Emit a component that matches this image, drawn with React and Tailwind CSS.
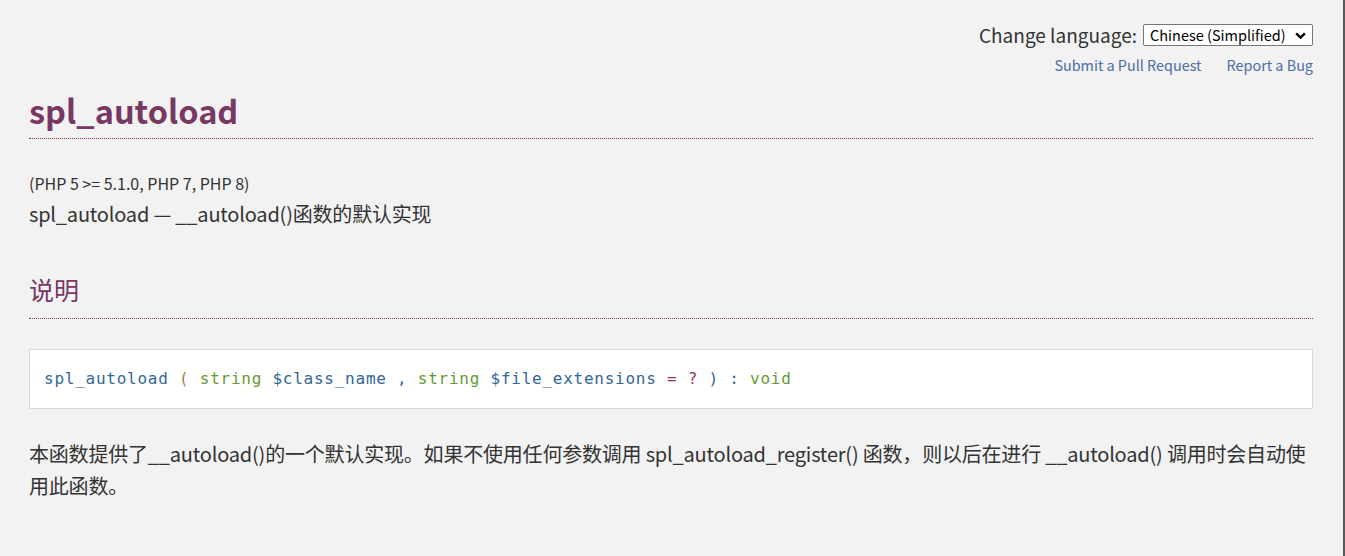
export default function App() {
  const sans = { fontFamily: '"Noto Sans CJK SC", "Noto Sans", sans-serif' };
  const mono = { fontFamily: '"DejaVu Sans Mono", monospace' };
  return (
    <div className="min-h-[556px] bg-[#f2f2f2] text-[#333] border-r-2 border-[#5a5a5a]" style={sans}>
      <div className="pl-[29px] pr-[30px] pt-[22px] pb-10">
        <div className="flex flex-col items-end">
          <div className="flex items-center gap-[6px] h-[26px]">
            <span className="text-[19px] leading-[26px] text-[#333]">Change language:</span>
            <div className="flex items-center justify-between h-[22px] w-[170px] border border-[#767676] bg-white pl-[6px] pr-[5px] rounded-[2px]">
              <span className="text-[14.5px] leading-[20px] text-black">Chinese (Simplified)</span>
              <svg width="13" height="13" viewBox="0 0 12 12" fill="none" stroke="#000" strokeWidth="2.2"><path d="M2 4l4 4 4-4" /></svg>
            </div>
          </div>
          <div className="flex gap-[25px] mt-[7px] text-[14.4px] leading-[20px] text-[#4a6ea5]">
            <span>Submit a Pull Request</span>
            <span>Report a Bug</span>
          </div>
        </div>
        <h1 className="mt-[11px] text-[32.5px] leading-[48px] font-semibold text-[#793862] border-b border-dotted border-[#793862] pb-[4px]">spl_autoload</h1>
        <div className="mt-[32px] text-[16px] leading-[24px] text-[#333]">(PHP 5 &gt;= 5.1.0, PHP 7, PHP 8)</div>
        <div className="mt-[5px] text-[20px] leading-[28px] text-[#333] tracking-[-0.2px]">spl_autoload — __autoload()函数的默认实现</div>
        <h2 className="mt-[43px] text-[25px] leading-[36px] text-[#793862] border-b border-dotted border-[#793862] pb-[11px]">说明</h2>
        <div className="mt-[30px] h-[60px] flex items-center bg-white border border-[#d9d9d9] px-[14px] text-[16px] tracking-[0.75px]" style={mono}>
          <span className="text-[#336699]">spl_autoload</span>
          <span className="whitespace-pre text-[#a0824f]"> ( </span>
          <span className="text-[#669933]">string</span>
          <span className="whitespace-pre"> </span>
          <span className="text-[#336699]">$class_name</span>
          <span className="whitespace-pre text-[#336699]"> , </span>
          <span className="text-[#669933]">string</span>
          <span className="whitespace-pre"> </span>
          <span className="text-[#336699]">$file_extensions</span>
          <span className="whitespace-pre text-[#993366]"> = ? </span>
          <span className="whitespace-pre text-[#336699]">) : </span>
          <span className="text-[#669933]">void</span>
        </div>
        <p className="mt-[29px] text-[20px] leading-[32px] text-[#333] tracking-[-0.2px]">
          本函数提供了__autoload()的一个默认实现。如果不使用任何参数调用 spl_autoload_register() 函数，则以后在进行 __autoload() 调用时会自动使用此函数。
        </p>
      </div>
    </div>
  );
}
